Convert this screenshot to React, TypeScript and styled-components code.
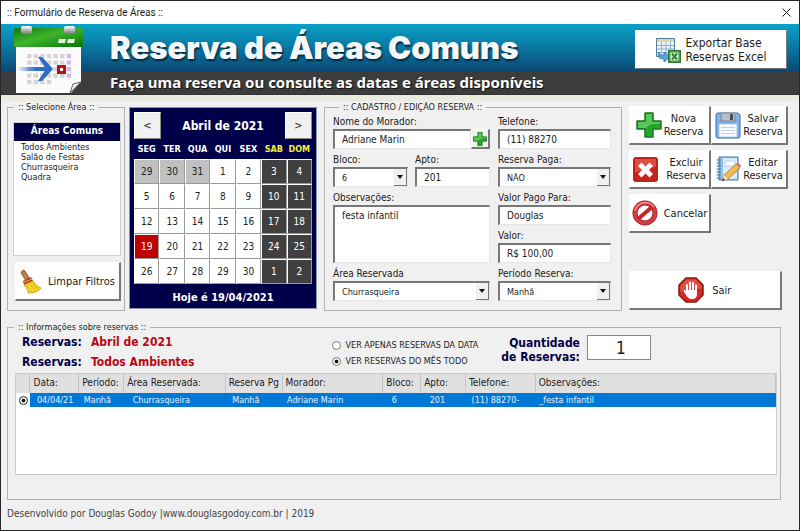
import React, { useState } from "react";
import styled, { createGlobalStyle, css } from "styled-components";

const tahoma = '"DejaVu Sans Condensed", "DejaVu Sans", sans-serif';
const segoe = '"Noto Sans", "Open Sans", sans-serif';

const GlobalStyle = createGlobalStyle`
  * { box-sizing: border-box; }
  body { margin: 0; background: #f0f0f0; }
  button, input, select, textarea { font-family: inherit; color: inherit; margin: 0; }
  ul, p, h1 { margin: 0; padding: 0; }
`;

const Window = styled.div`
  display: flex;
  flex-direction: column;
  min-height: 100vh;
  border: 1px solid #26262a;
  background: #f0f0f0;
  color: #1c1c1c;
  font: 12px/14px ${tahoma};
`;

const TitleBar = styled.div`
  display: flex;
  align-items: center;
  justify-content: space-between;
  height: 23px;
  padding: 0 8px 0 6px;
  background: #fff;
  font: 10px/14px Roboto, sans-serif;
`;

const CloseButton = styled.button`
  display: flex;
  padding: 0;
  border: 0;
  background: none;
`;

const Banner = styled.header`
  display: grid;
  grid-template-columns: 97px 1fr auto;
  height: 71px;
  padding: 0 12px;
  background: linear-gradient(#08a2c6 0, #0a7ea8 20px, #0a4a75 47px, #3c3c3c 47px);
  border-bottom: 1px solid #333;
`;

const BannerText = styled.div`
  color: #fff;
  white-space: nowrap;
`;

const Title = styled.h1`
  height: 47px;
  font: 900 31px/47px Inter, "Open Sans", sans-serif;
  color: #f4f8fb;
  text-shadow: 1px 2px 2px #04283f;
`;

const Subtitle = styled.p`
  font: 700 15px/22px ${segoe};
  text-shadow: 1px 1px 1px #111;
`;

const Strip = styled.div`
  height: 6px;
  background: #ebeae0;
`;

const raised = css`
  background: #fff;
  border: 1px solid #fff;
  border-right: 2px solid #777;
  border-bottom: 2px solid #777;
`;

const sunken = css`
  background: #fff;
  border: 1px solid #e6e6e6;
  border-top: 2px solid #777;
  border-left: 2px solid #777;
  border-radius: 0;
`;

const ActionButton = styled.button<{ $gap?: number }>`
  ${raised}
  display: flex;
  align-items: center;
  justify-content: center;
  gap: ${(p) => p.$gap ?? 2}px;
  height: 39px;
  padding: 0;
  font-size: 11px;
  line-height: 13px;
  white-space: nowrap;
`;

const ExportButton = styled(ActionButton)`
  width: 152px;
  margin-top: 6px;
  border-right-width: 1px;
  border-bottom-width: 1px;
  font-size: 12px;
  line-height: 14px;
  text-align: left;
`;

const Main = styled.main`
  display: grid;
  grid-template-columns: 118fr 188fr 301fr 162fr;
  column-gap: 4px;
  height: 210px;
  padding: 0 11px 0 6px;
`;

const Group = styled.fieldset`
  min-width: 0;
  margin: 0;
  padding: 0;
  border: 1px solid #b0b0b0;
`;

const Legend = styled.legend<{ $inset?: number }>`
  margin-left: ${(p) => p.$inset ?? 6}px;
  padding: 0 4px;
  font-size: 9px;
  line-height: 12px;
  white-space: nowrap;
`;

const AreaBody = styled.div`
  display: flex;
  flex-direction: column;
  gap: 6px;
  padding: 9px 3px 0 5px;
`;

const AreaBox = styled.div`
  height: 134px;
  background: #fff;
  border: 1px solid #d0d0d0;
`;

const AreaHeading = styled.div`
  height: 18px;
  background: #000048;
  color: #fff;
  font-weight: bold;
  font-size: 10px;
  line-height: 15px;
  text-align: center;
`;

const AreaList = styled.ul`
  list-style: none;
  padding: 1px 7px;
`;

const AreaItem = styled.button`
  display: block;
  padding: 0;
  border: 0;
  background: none;
  font-size: 9px;
  line-height: 10px;
`;

const ClearButton = styled(ActionButton)`
  margin-left: 2px;
`;

const Calendar = styled.section`
  display: flex;
  flex-direction: column;
  margin: 6px 0 2px;
  padding: 4px 4px 0;
  background: #000048;
  border: 1px solid #8a93a8;
  color: #fff;
`;

const CalendarHead = styled.div`
  display: flex;
  align-items: center;
  justify-content: space-between;
  font-weight: bold;
`;

const MonthButton = styled.button`
  width: 27px;
  height: 27px;
  padding: 0;
  background: #f0f0f0;
  border: 1px solid #fff;
  border-right-color: #888;
  border-bottom-color: #888;
  color: #222;
  font-size: 11px;
`;

const DayTable = styled.table`
  width: 100%;
  margin-top: 3px;
  border-collapse: collapse;
  table-layout: fixed;
`;

const WeekDay = styled.th<{ $weekend: boolean }>`
  height: 17px;
  padding: 0 0 2px;
  color: ${(p) => (p.$weekend ? "#f6f03c" : "#fff")};
  font-size: 9px;
  line-height: 11px;
`;

const DayCell = styled.td`
  height: 25px;
  padding: 0;
`;

type DayKind = "plain" | "out" | "weekend" | "today";
const dayFill: Record<DayKind, string> = { plain: "#fff", out: "#c0c0c0", weekend: "#404040", today: "#c00000" };

const DayButton = styled.button<{ $kind: DayKind }>`
  display: block;
  width: 100%;
  height: 25px;
  padding: 0;
  border: 1px solid #fff;
  border-right-color: #999;
  border-bottom-color: #999;
  background: ${(p) => dayFill[p.$kind]};
  color: ${(p) => (p.$kind === "weekend" || p.$kind === "today" ? "#fff" : "#222")};
  font-size: 10px;
`;

const TodayLine = styled.p`
  margin-top: 7px;
  font-weight: bold;
  font-size: 11px;
  text-align: center;
`;

const FormGroup = styled(Group)`
  margin-left: 3px;
`;

const FormBody = styled.div`
  display: grid;
  grid-template-columns: 157fr 113fr;
  column-gap: 8px;
  padding: 2px 10px 0 8px;
`;

const FormColumn = styled.div`
  display: flex;
  flex-direction: column;
  gap: 4px;
  min-width: 0;
`;

const FieldRow = styled.div`
  display: grid;
  grid-template-columns: 75fr 75fr;
  gap: 7px;
`;

const Field = styled.div`
  display: flex;
  flex-direction: column;
  min-width: 0;
`;

const Label = styled.label`
  font-size: 10px;
  line-height: 14px;
  white-space: nowrap;
`;

const TextInput = styled.input`
  ${sunken}
  width: 100%;
  height: 20px;
  padding: 0 0 0 7px;
  font-size: 10px;
`;

const InputWithButton = styled.div`
  display: flex;
`;

const AddButton = styled.button`
  ${raised}
  flex: none;
  width: 19px;
  height: 20px;
  padding: 0;
  background: #f0f0f0;
  display: flex;
  align-items: center;
  justify-content: center;
`;

const Notes = styled.textarea`
  ${sunken}
  display: block;
  width: 100%;
  height: 58px;
  padding: 2px 7px;
  font-size: 10px;
  line-height: 14px;
  resize: none;
`;

const SelectBox = styled.div`
  ${sunken}
  display: grid;
  grid-template-columns: 1fr 13px;
  height: 20px;
`;

const SelectInput = styled.select`
  grid-column: 1 / 3;
  grid-row: 1;
  width: 100%;
  padding: 0 14px 0 7px;
  border: 0;
  background: none;
  appearance: none;
  font-size: 9px;
`;

const SelectArrow = styled.span`
  grid-column: 2;
  grid-row: 1;
  display: flex;
  align-items: center;
  justify-content: center;
  background: #f0f0f0;
  border-right: 1px solid #777;
  border-bottom: 1px solid #777;
  pointer-events: none;
`;

const Actions = styled.div`
  display: flex;
  flex-direction: column;
  padding-top: 5px;
  margin-left: 3px;
`;

const ActionGrid = styled.div`
  display: grid;
  grid-template-columns: 82fr 77fr;
  row-gap: 5px;
`;

const ExitButton = styled(ActionButton)`
  width: 96%;
  margin-top: auto;
  margin-bottom: 1px;
`;

const ReportGroup = styled(Group)`
  margin: 10px 18px 0 6px;
  flex: 1;
`;

const Summary = styled.div`
  display: grid;
  grid-template-columns: 321fr 148fr 102fr 201fr;
  height: 40px;
`;

const Facts = styled.div`
  display: grid;
  grid-template-columns: 69px 1fr;
  padding-left: 14px;
  color: #000048;
  font-weight: bold;
  font-size: 12px;
  line-height: 19px;
`;

const FactValue = styled.span`
  color: #b80810;
`;

const Filters = styled.div`
  display: flex;
  flex-direction: column;
  gap: 2px;
  padding-top: 5px;
  margin-left: 5px;
`;

const FilterLabel = styled.label`
  display: flex;
  align-items: center;
  gap: 4px;
  font-size: 9px;
  line-height: 14px;
  white-space: nowrap;
`;

const Radio = styled.input`
  appearance: none;
  flex: none;
  width: 9px;
  height: 9px;
  border: 1px solid #777;
  border-radius: 50%;
  background: #fff;
  &:checked { background: radial-gradient(circle closest-side, #111 45%, #fff 65%); }
`;

const CountLabel = styled.label`
  color: #000048;
  font-weight: bold;
  font-size: 12px;
  line-height: 14px;
  text-align: right;
  white-space: nowrap;
  padding-top: 3px;
`;

const CountInput = styled.input`
  width: 64px;
  height: 25px;
  margin: 2px 0 0 7px;
  padding: 0 0 0 4px;
  border: 1px solid #888;
  background: #fff;
  font-size: 17px;
  text-align: center;
`;

const TableBox = styled.div`
  height: 102px;
  margin: 0 3px 0 7px;
  background: #fff;
  border: 1px solid #ccc;
`;

const Records = styled.table`
  width: 100%;
  border-collapse: collapse;
  table-layout: fixed;
`;

const HeadCell = styled.th`
  height: 19px;
  padding: 0 0 1px 3px;
  background: #e0e0e0;
  border-right: 1px solid #c4c4c4;
  font-weight: normal;
  font-size: 10px;
  text-align: left;
  white-space: nowrap;
`;

const Cell = styled.td<{ $indent: number }>`
  height: 14px;
  padding: 0 0 0 ${(p) => p.$indent}px;
  background: #0078d7;
  color: #e4f1fc;
  font-size: 9px;
  line-height: 14px;
  white-space: nowrap;
`;

const MarkCell = styled.td`
  padding: 0 0 0 3px;
  line-height: 0;
`;

const RowRadio = styled(Radio)`
  display: block;
  border-color: #222;
`;

const Footer = styled.footer`
  padding: 6px 6px 9px;
  font-size: 10px;
  line-height: 15px;
  color: #444;
`;

function CalendarIcon() {
  const dots: React.ReactElement[] = [];
  for (let r = 0; r < 5; r++)
    for (let c = 0; c < 7; c++)
      if (r < 4 || c < 4)
        dots.push(
          <rect key={`${r}-${c}`} x={14 + c * 6.6} y={30 + r * 6.5} width="4.4" height="4.2" fill={c === 6 ? "#d3b6ee" : "#d5d5d8"} />
        );
  return (
    <svg width="70" height="70" viewBox="0 0 70 70" aria-hidden="true">
      <defs>
        <linearGradient id="calGreen" x1="0" x2="1" y2="1">
          <stop offset="0" stopColor="#0c7a0c" />
          <stop offset=".45" stopColor="#3fb52e" />
          <stop offset="1" stopColor="#067306" />
        </linearGradient>
        <linearGradient id="calRing" x2="0" y2="1">
          <stop offset="0" stopColor="#fff" />
          <stop offset="1" stopColor="#777" />
        </linearGradient>
        <linearGradient id="calArrow">
          <stop offset="0" stopColor="#2e6dc4" stopOpacity="0" />
          <stop offset=".6" stopColor="#2e6dc4" />
        </linearGradient>
      </defs>
      <path d="M3 22H68V58L58 69H3Z" fill="#fbfbfb" />
      <path d="M1 6Q1 4 3 4H68Q70 4 70 6V23H1Z" fill="url(#calGreen)" />
      <path d="M45 19l1-4h7l-1 4zM54 19l1-4h7l-1 4z" fill="#e5f5df" />
      <rect x="8" y="2" width="11" height="8" rx="2" fill="url(#calRing)" />
      <rect x="51" y="2" width="11" height="8" rx="2" fill="url(#calRing)" />
      {dots}
      <rect x="44" y="41" width="9" height="9" fill="#bc1015" />
      <rect x="47" y="44" width="3" height="3" fill="#fff" />
      <rect x="4" y="43" width="32" height="4" fill="url(#calArrow)" />
      <path d="M25 33Q29 32 31 35L40 45L31 55Q29 58 25 57L33 45Z" fill="#2e6dc4" />
      <path d="M57 69L60 60L68 58Z" fill="#f0f0f0" stroke="#666" strokeWidth="1" />
    </svg>
  );
}

function ExcelIcon() {
  return (
    <svg width="25" height="26" viewBox="0 0 25 26" aria-hidden="true">
      <path d="M.5 1.5h18v18H.5z" fill="#e9f3fb" stroke="#4f7f9f" />
      <path d="M1 2h17v3H1z" fill="#e8d49a" />
      <path d="M1 8.500H18M1 12H18M1 15.500H18M5.500 5V19M10 5V19M14.500 5V19" stroke="#8db1cf" />
      <path d="M3 15q0 4 5 3v-3l6 5-6 5v-3q-8 0-5-7z" fill="#54a3dc" stroke="#2c6ea8" strokeWidth=".8" />
      <rect x="12.500" y="13.500" width="12" height="12" fill="#4c9a49" stroke="#2f752d" />
      <rect x="14.500" y="15.500" width="8" height="8" fill="#dcefd8" />
      <path d="M16 16.500l5 6M21 16.500l-5 6" stroke="#2f8a30" strokeWidth="2" />
    </svg>
  );
}

function BroomIcon() {
  return (
    <svg width="22" height="25" viewBox="0 0 22 25" aria-hidden="true">
      <path d="M2 2Q4 0 5 2L10 10 6 12 1 4Z" fill="#b9814b" stroke="#70451f" strokeWidth=".7" />
      <path d="M3 12L11 8L13 12L4 16Z" fill="#b83121" />
      <path d="M3.500 13.500L12 10" stroke="#f0c04c" />
      <path d="M4 16L13 12Q16 17 21 19Q18 24 8 24Q9 22 4 16Z" fill="#f4d72c" stroke="#c79b16" strokeWidth=".8" />
      <path d="M7 16q2 4 5 7M10 15q3 5 6 7M12 14q3 4 7 6" stroke="#caa51d" fill="none" strokeWidth=".7" />
    </svg>
  );
}

function PlusIcon({ size }: { size: number }) {
  return (
    <svg width={size} height={size} viewBox="0 0 26 26" aria-hidden="true">
      <path d="M9 1H17V9H25V17H17V25H9V17H1V9H9Z" fill="#25a52b" stroke="#147a1b" strokeWidth="1.500" strokeLinejoin="round" />
      <path d="M10 2H16V10H24V12Q14 11 10 16H2V10H10Z" fill="#73d36c" opacity=".7" />
    </svg>
  );
}

function SaveIcon() {
  return (
    <svg width="26" height="27" viewBox="0 0 26 27" aria-hidden="true">
      <path d="M3 1H23L25 3V24Q25 26 23 26H3Q1 26 1 24V3Q1 1 3 1Z" fill="#7fb2e6" stroke="#3e6fae" />
      <path d="M6 1H20V9H6Z" fill="#b9bcc2" stroke="#777b84" strokeWidth=".8" />
      <rect x="15" y="2" width="3" height="6" fill="#444a55" />
      <path d="M4 12H22V25H4Z" fill="#f7fafe" stroke="#a4c1df" strokeWidth=".7" />
      <path d="M6 15.500H20M6 18.500H20M6 21.500H20" stroke="#bcd1e8" />
    </svg>
  );
}

function DeleteIcon() {
  return (
    <svg width="25" height="25" viewBox="0 0 25 25" aria-hidden="true">
      <rect x=".7" y=".7" width="23.600" height="23.600" rx="1.500" fill="#c9231d" stroke="#8d1713" />
      <path d="M2 2H23V10Q12 10 2 16Z" fill="#e96a5b" opacity=".6" />
      <path d="M8.500 5.500l4 4 4-4 3.500 3.500-4 4 4 4-3.500 3.500-4-4-4 4L5 17l4-4-4-4z" fill="#fff" />
    </svg>
  );
}

function EditIcon() {
  return (
    <svg width="26" height="26" viewBox="0 0 26 26" aria-hidden="true">
      <path d="M4 1H23V24H4Z" fill="#8fc3ea" stroke="#3f7cb2" />
      <path d="M8 2H22V23H8Z" fill="#d9ecf9" />
      <path d="M10 5H20V10H10Z" fill="#fff" stroke="#9dc3e2" strokeWidth=".7" />
      <path d="M1.500 4H6M1.500 7H6M1.500 10H6M1.500 13H6M1.500 16H6M1.500 19H6M1.500 22H6" stroke="#41719c" />
      <path d="M7 25L9 19L21 8L25 12L13 23Z" fill="#f2b84b" stroke="#a86d22" strokeWidth=".7" />
      <path d="M21 8L23 6.500Q25 7 26 10L25 12Z" fill="#d77a75" />
      <path d="M7 25L9 19L13 23Z" fill="#f8e4c3" />
      <path d="M7 25l1-3 2 2z" fill="#333" />
    </svg>
  );
}

function CancelIcon() {
  return (
    <svg width="26" height="26" viewBox="0 0 26 26" aria-hidden="true">
      <circle cx="13" cy="13" r="10" fill="#fff" stroke="#99181d" strokeWidth="5" />
      <circle cx="13" cy="13" r="10" fill="none" stroke="#d33c40" strokeWidth="3.600" />
      <path d="M6 19L20 7" stroke="#c9262b" strokeWidth="4" />
      <path d="M3 11Q5 3 13 2.500Q19 2.500 22 7" stroke="#ee9291" strokeWidth="1.500" fill="none" />
    </svg>
  );
}

function StopIcon() {
  return (
    <svg width="26" height="26" viewBox="0 0 26 26" aria-hidden="true">
      <path d="M8 1H18L25 8V18L18 25H8L1 18V8Z" fill="#d32a22" stroke="#8e1814" strokeWidth="1.500" />
      <path d="M8.500 2.500H17.500L23.500 8.500V12Q12 10 2.500 15V8.500Z" fill="#f07a68" opacity=".5" />
      <path d="M9 17V8M12 14V5.500M15 14V6M18 16V8.500" stroke="#fff" strokeWidth="2" strokeLinecap="round" />
      <path d="M8 13H19V17Q19 22 14 22Q10 22 8 18L5.500 14Q6 12 8 14Z" fill="#fff" />
    </svg>
  );
}

const weekDays = ["SEG", "TER", "QUA", "QUI", "SEX", "SAB", "DOM"];
const weeks = [
  [29, 30, 31, 1, 2, 3, 4],
  [5, 6, 7, 8, 9, 10, 11],
  [12, 13, 14, 15, 16, 17, 18],
  [19, 20, 21, 22, 23, 24, 25],
  [26, 27, 28, 29, 30, 1, 2],
];

function dayKind(week: number, col: number, day: number): DayKind {
  if (col > 4) return "weekend";
  if (week === 0 && day > 20) return "out";
  return day === 19 ? "today" : "plain";
}

const columns = [
  { head: "Data:", width: 49, value: "04/04/21", indent: 7 },
  { head: "Período:", width: 45, value: "Manhã", indent: 5 },
  { head: "Área Reservada:", width: 102, value: "Churrasqueira", indent: 9 },
  { head: "Reserva Pg", width: 57, value: "Manhã", indent: 7 },
  { head: "Morador:", width: 101, value: "Adriane Marin", indent: 5 },
  { head: "Bloco:", width: 38, value: "6", indent: 9 },
  { head: "Apto:", width: 45, value: "201", indent: 9 },
  { head: "Telefone:", width: 70, value: "(11) 88270-", indent: 6 },
  { head: "Observações:", width: 241, value: "_festa infantil", indent: 4 },
];
const totalWidth = 762;

function Combo({ id, label, value, options }: { id: string; label: string; value: string; options: string[] }) {
  return (
    <Field>
      <Label htmlFor={id}>{label}</Label>
      <SelectBox>
        <SelectInput id={id} defaultValue={value}>
          {options.map((o) => <option key={o}>{o}</option>)}
        </SelectInput>
        <SelectArrow>
          <svg width="6" height="4" viewBox="0 0 6 4" aria-hidden="true"><path d="M0 0H6L3 4Z" fill="#111" /></svg>
        </SelectArrow>
      </SelectBox>
    </Field>
  );
}

function TextField({ id, label, value }: { id: string; label: string; value: string }) {
  return (
    <Field>
      <Label htmlFor={id}>{label}</Label>
      <TextInput id={id} defaultValue={value} />
    </Field>
  );
}

export default function App() {
  const [scope, setScope] = useState("mes");
  return (
    <Window>
      <GlobalStyle />
      <TitleBar>
        <span>:: Formulário de Reserva de Áreas ::</span>
        <CloseButton aria-label="Fechar">
          <svg width="9" height="9" viewBox="0 0 9 9"><path d="M.5 .5L8.500 8.500M8.500 .5L.5 8.500" stroke="#222" /></svg>
        </CloseButton>
      </TitleBar>
      <Banner>
        <CalendarIcon />
        <BannerText>
          <Title>Reserva de Áreas Comuns</Title>
          <Subtitle>Faça uma reserva ou consulte as datas e áreas disponíveis</Subtitle>
        </BannerText>
        <ExportButton $gap={5}>
          <ExcelIcon />
          <span>Exportar Base<br />Reservas Excel</span>
        </ExportButton>
      </Banner>
      <Strip />
      <Main>
        <Group>
          <Legend>:: Selecione Área ::</Legend>
          <AreaBody>
            <AreaBox>
              <AreaHeading>Áreas Comuns</AreaHeading>
              <AreaList>
                {["Todos Ambientes", "Salão de Festas", "Churrasqueira", "Quadra"].map((a) => (
                  <li key={a}><AreaItem>{a}</AreaItem></li>
                ))}
              </AreaList>
            </AreaBox>
            <ClearButton $gap={6}><BroomIcon />Limpar Filtros</ClearButton>
          </AreaBody>
        </Group>

        <Calendar>
          <CalendarHead>
            <MonthButton aria-label="Mês anterior">&lt;</MonthButton>
            <span>Abril de 2021</span>
            <MonthButton aria-label="Próximo mês">&gt;</MonthButton>
          </CalendarHead>
          <DayTable>
            <thead>
              <tr>{weekDays.map((d, i) => <WeekDay key={d} $weekend={i > 4}>{d}</WeekDay>)}</tr>
            </thead>
            <tbody>
              {weeks.map((week, w) => (
                <tr key={w}>
                  {week.map((day, c) => (
                    <DayCell key={c}><DayButton $kind={dayKind(w, c, day)}>{day}</DayButton></DayCell>
                  ))}
                </tr>
              ))}
            </tbody>
          </DayTable>
          <TodayLine>Hoje é 19/04/2021</TodayLine>
        </Calendar>

        <FormGroup>
          <Legend $inset={14}>:: CADASTRO / EDIÇÃO RESERVA ::</Legend>
          <FormBody>
            <FormColumn>
              <Field>
                <Label htmlFor="nome">Nome do Morador:</Label>
                <InputWithButton>
                  <TextInput id="nome" defaultValue="Adriane Marin" />
                  <AddButton aria-label="Adicionar morador"><PlusIcon size={14} /></AddButton>
                </InputWithButton>
              </Field>
              <FieldRow>
                <Combo id="bloco" label="Bloco:" value="6" options={["6"]} />
                <TextField id="apto" label="Apto:" value="201" />
              </FieldRow>
              <Field>
                <Label htmlFor="obs">Observações:</Label>
                <Notes id="obs" defaultValue="festa infantil" />
              </Field>
              <Combo id="area" label="Área Reservada" value="Churrasqueira" options={["Churrasqueira", "Salão de Festas", "Quadra"]} />
            </FormColumn>
            <FormColumn>
              <TextField id="telefone" label="Telefone:" value="(11) 88270" />
              <Combo id="paga" label="Reserva Paga:" value="NÃO" options={["NÃO", "SIM"]} />
              <TextField id="para" label="Valor Pago Para:" value="Douglas" />
              <TextField id="valor" label="Valor:" value="R$ 100,00" />
              <Combo id="periodo" label="Período Reserva:" value="Manhã" options={["Manhã", "Tarde", "Noite"]} />
            </FormColumn>
          </FormBody>
        </FormGroup>

        <Actions>
          <ActionGrid>
            <ActionButton><PlusIcon size={26} /><span>Nova<br />Reserva</span></ActionButton>
            <ActionButton><SaveIcon /><span>Salvar<br />Reserva</span></ActionButton>
            <ActionButton $gap={8}><DeleteIcon /><span>Excluir<br />Reserva</span></ActionButton>
            <ActionButton><EditIcon /><span>Editar<br />Reserva</span></ActionButton>
            <ActionButton $gap={6}><CancelIcon />Cancelar</ActionButton>
          </ActionGrid>
          <ExitButton $gap={8}><StopIcon />Sair</ExitButton>
        </Actions>
      </Main>

      <ReportGroup>
        <Legend>:: Informações sobre reservas ::</Legend>
        <Summary>
          <Facts>
            <span>Reservas:</span><FactValue>Abril de 2021</FactValue>
            <span>Reservas:</span><FactValue>Todos Ambientes</FactValue>
          </Facts>
          <Filters>
            <FilterLabel>
              <Radio type="radio" name="escopo" checked={scope === "data"} onChange={() => setScope("data")} />
              VER APENAS RESERVAS DA DATA
            </FilterLabel>
            <FilterLabel>
              <Radio type="radio" name="escopo" checked={scope === "mes"} onChange={() => setScope("mes")} />
              VER RESERVAS DO MÊS TODO
            </FilterLabel>
          </Filters>
          <CountLabel htmlFor="quantidade">Quantidade<br />de Reservas:</CountLabel>
          <CountInput id="quantidade" readOnly value="1" />
        </Summary>
        <TableBox>
          <Records>
            <colgroup>
              <col style={{ width: `${(14 / totalWidth) * 100}%` }} />
              {columns.map((c) => <col key={c.head} style={{ width: `${(c.width / totalWidth) * 100}%` }} />)}
            </colgroup>
            <thead>
              <tr>
                <HeadCell aria-label="Seleção" />
                {columns.map((c) => <HeadCell key={c.head}>{c.head}</HeadCell>)}
              </tr>
            </thead>
            <tbody>
              <tr>
                <MarkCell><RowRadio type="radio" name="registro" aria-label="Selecionar reserva" defaultChecked /></MarkCell>
                {columns.map((c) => <Cell key={c.head} $indent={c.indent}>{c.value}</Cell>)}
              </tr>
            </tbody>
          </Records>
        </TableBox>
      </ReportGroup>
      <Footer>Desenvolvido por Douglas Godoy |www.douglasgodoy.com.br | 2019</Footer>
    </Window>
  );
}
